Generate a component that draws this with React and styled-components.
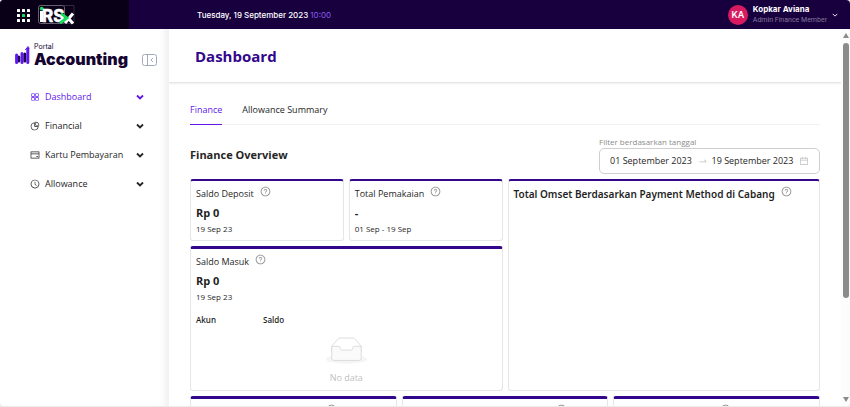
import React from "react";
import styled, { createGlobalStyle } from "styled-components";
import {
  AiOutlineAppstore,
  AiOutlineCalendar,
  AiOutlineClockCircle,
  AiOutlineCreditCard,
  AiOutlinePieChart,
  AiOutlineQuestionCircle,
  AiOutlineSwapRight,
} from "react-icons/ai";

const GlobalStyle = createGlobalStyle`
  * {
    box-sizing: border-box;
  }

  body {
    margin: 0;
    background: #ececec;
    color: #1f1f1f;
    font-family: "Open Sans", "Noto Sans", sans-serif;
    font-size: 9px;
    line-height: 12px;
  }

  h1, h2, h3, p {
    margin: 0;
  }

  button, input {
    padding: 0;
    border: 0;
    background: none;
    color: inherit;
    font: inherit;
  }

  button {
    cursor: pointer;
  }

  svg {
    display: block;
    flex: none;
  }
`;

const Page = styled.div`
  height: 100vh;
  padding-bottom: 1px;
  display: flex;
  flex-direction: column;
`;

const Window = styled.div`
  flex: 1;
  min-height: 0;
  display: flex;
  flex-direction: column;
  overflow: hidden;
  border-radius: 4px;
  background: #fff;
`;

const TopBar = styled.header`
  flex: none;
  height: 29px;
  display: flex;
  align-items: center;
  background: #18003f;
  color: #fff;
  font-family: Inter, sans-serif;
`;

const Brand = styled.div`
  width: 129px;
  height: 100%;
  padding-left: 16px;
  display: flex;
  align-items: center;
  gap: 8px;
  background: #090018;
`;

const Today = styled.p`
  margin-left: 68px;
  flex: 1;
  font-size: 8px;
  font-weight: 500;

  span {
    color: #8a5cf0;
    font-weight: 400;
  }
`;

const Account = styled.button`
  margin-right: 12px;
  display: flex;
  align-items: center;
  gap: 5px;
  text-align: left;
`;

const Avatar = styled.span`
  width: 20px;
  height: 20px;
  border-radius: 50%;
  background: #d81b60;
  font-size: 9px;
  font-weight: 600;
  line-height: 20px;
  text-align: center;
`;

const AccountText = styled.span`
  display: flex;
  flex-direction: column;
  font-size: 8px;
  line-height: 11px;

  small {
    color: #83769b;
    font-family: Roboto, sans-serif;
    font-size: 7px;
  }
`;

const Body = styled.div`
  flex: 1;
  min-height: 0;
  display: flex;
`;

const Sidebar = styled.aside`
  flex: none;
  width: 169px;
  padding: 14px 11px 0 15px;
  border-right: 1px solid #f2f2f2;
  box-shadow: inset -8px 0 8px -6px #ececec;
`;

const PortalHead = styled.div`
  display: flex;
  align-items: flex-end;
  justify-content: space-between;
`;

const PortalLogo = styled.div`
  display: flex;
  align-items: center;
  gap: 4px;
`;

const PortalName = styled.div`
  color: #14042f;
  font-family: Inter, sans-serif;
  font-size: 16px;
  font-weight: 900;
  line-height: 17px;

  small {
    display: block;
    font-size: 7px;
    font-weight: 400;
    line-height: 8px;
  }
`;

const CollapseButton = styled.button`
  padding-bottom: 2px;
`;

const Menu = styled.nav`
  margin: 19px 13px 0 15px;
  display: flex;
  flex-direction: column;
  gap: 9px;
`;

const MenuItem = styled.button`
  height: 20px;
  display: flex;
  align-items: center;
  gap: 5px;
  color: ${({ $active }) => ($active ? "#5f17eb" : "#262626")};

  span {
    flex: 1;
    text-align: left;
  }
`;

const Main = styled.main`
  flex: 1;
  min-width: 0;
  overflow: hidden;
`;

const PageHeader = styled.div`
  height: 54px;
  padding: 0 26px;
  display: flex;
  align-items: center;
  border-bottom: 1px solid #e6e6e6;
  box-shadow: 0 1px 2px #eee;
`;

const PageTitle = styled.h1`
  color: #33078c;
  font-size: 15px;
  font-weight: 700;
  line-height: 20px;
`;

const Content = styled.div`
  padding: 15px 21px 0;
`;

const Tabs = styled.div`
  display: flex;
  gap: 20px;
  border-bottom: 1px solid #f0f0f0;
`;

const Tab = styled.button`
  height: 27px;
  margin-bottom: -1px;
  padding-bottom: 2px;
  border-bottom: 1px solid ${({ $active }) => ($active ? "#5f17eb" : "transparent")};
  color: ${({ $active }) => ($active ? "#5f17eb" : "#262626")};
`;

const Overview = styled.div`
  padding: 11px 0 5px;
  display: flex;
  align-items: flex-end;
  justify-content: space-between;
`;

const SectionTitle = styled.h2`
  padding-bottom: 11px;
  color: #262626;
  font-size: 11px;
  font-weight: 700;
  line-height: 16px;
`;

const Filter = styled.div`
  width: 221px;

  label {
    display: block;
    color: #8c8c8c;
    font-size: 8px;
  }
`;

const DateRange = styled.div`
  height: 26px;
  padding: 0 10px;
  display: flex;
  align-items: center;
  gap: 4px;
  border: 1px solid #cfcfcf;
  border-radius: 5px;
  color: #bfbfbf;

  input {
    flex: 1;
    min-width: 0;
    color: #1f1f1f;
  }
`;

const Cards = styled.div`
  display: grid;
  grid-template-columns: repeat(${({ $columns }) => $columns}, 1fr);
  gap: 5px;
`;

const CardStack = styled.div`
  display: flex;
  flex-direction: column;
  gap: 5px;
`;

const Card = styled.section`
  min-height: 62px;
  padding: 5px;
  grid-column: span ${({ $span }) => $span || 1};
  border: 1px solid #e6e6e6;
  border-top: ${({ $thick }) => ($thick ? "3px" : "2px")} solid #33078c;
  border-radius: 3px;
`;

const CardHead = styled.div`
  padding-left: ${({ $indent }) => $indent || 0}px;
  display: flex;
  gap: 6px;
  color: #8c8c8c;

  h3 {
    padding-top: 2px;
    color: #1f1f1f;
    font-family: ${({ $large }) => ($large ? '"Noto Sans", sans-serif' : "inherit")};
    font-size: ${({ $large }) => ($large ? "10px" : "9px")};
    font-weight: ${({ $large }) => ($large ? 600 : 400)};
  }
`;

const Amount = styled.p`
  margin-top: 5px;
  font-size: 11px;
  font-weight: 700;
  line-height: 16px;
`;

const Period = styled.p`
  margin-top: 2px;
  font-size: 8px;
`;

const AccountTable = styled.table`
  width: 100%;
  margin-top: 11px;
  border-collapse: collapse;
  table-layout: fixed;

  th {
    padding: 0;
    font-size: 8px;
    font-weight: 600;
    text-align: left;
  }

  th:first-child {
    width: 67px;
  }

  td {
    padding: 11px 0 1px;
  }
`;

const Empty = styled.div`
  display: flex;
  flex-direction: column;
  align-items: center;
  gap: 8px;
  color: #bfbfbf;
`;

const Scroller = styled.div`
  flex: none;
  width: 9px;
  padding: 4px 1px 4px 2px;
  display: flex;
  flex-direction: column;
  align-items: center;
  gap: 5px;
  background: #fcfcfc;
`;

const ScrollTrack = styled.div`
  flex: 1;
  width: 6px;
`;

const ScrollThumb = styled.div`
  height: 73%;
  border-radius: 3px;
  background: #8b8b8b;
`;

const AppsIcon = () => (
  <svg width="14" height="14" viewBox="0 0 14 14">
    {[1, 6, 11].map((y) =>
      [1, 6, 11].map((x) => (
        <rect
          key={`${x}-${y}`}
          x={x}
          y={y}
          width="3"
          height="3"
          rx="0.6"
          fill={x === 6 && y === 6 ? "#12e05a" : "#fff"}
        />
      ))
    )}
  </svg>
);

const RsxLogo = () => (
  <svg width="37" height="20" viewBox="0 0 37 20" role="img" aria-label="iRSx">
    <rect x="0.5" y="0.5" width="26" height="18" rx="2" fill="none" stroke="#8f8b99" strokeWidth="0.7" />
    <path d="M26 .5h10v18H24" fill="none" stroke="#4b445c" strokeWidth="0.6" />
    <rect x="2" y="6" width="3" height="11" fill="#fff" />
    <circle cx="3.7" cy="3.6" r="1.9" fill="#12e05a" />
    <text
      x="4"
      y="16.5"
      fill="#fff"
      stroke="#fff"
      strokeWidth="0.6"
      fontFamily="Inter, sans-serif"
      fontSize="17"
      fontWeight="700"
    >
      RS
    </text>
    <path d="M35 8.5l-8 9.5M31 14l4 4.5" stroke="#fff" strokeWidth="3" fill="none" />
    <path d="M23 8.5l6 4.5-7 5" stroke="#12e05a" strokeWidth="2.8" fill="none" />
  </svg>
);

const BarsLogo = () => (
  <svg width="15" height="21" viewBox="0 0 15 21">
    <g strokeWidth="3" strokeLinecap="round">
      <path d="M3.8 12v4M9.8 9v7" stroke="#1d0844" />
      <path d="M1.6 10v7.5M7 8.5v9M12.8 4v13.5" stroke="#6018f0" />
    </g>
    <path d="M10.3 5l2.7-3.5 1.3 2" stroke="#6018f0" fill="none" />
  </svg>
);

const CollapseIcon = () => (
  <svg width="15" height="12" viewBox="0 0 15 12" fill="none" stroke="#a3abba">
    <rect x="0.5" y="0.5" width="14" height="11" rx="2" />
    <path d="M5.5 .5v11M11 4L9 6l2 2" />
  </svg>
);

const Chevron = ({ size = 8, weight = 1.8 }) => (
  <svg width={size} height={size} viewBox="0 0 8 8" fill="none" stroke="currentColor" strokeWidth={weight}>
    <path d="M1 2.5l3 3 3-3" />
  </svg>
);

const EmptyBox = () => (
  <svg width="41" height="27" viewBox="0 0 64 41">
    <g transform="translate(0 1)" fill="none" fillRule="evenodd">
      <ellipse fill="#f5f5f5" cx="32" cy="33" rx="32" ry="7" />
      <g fillRule="nonzero" stroke="#d9d9d9" strokeWidth="1.4">
        <path d="M55 12.76L44.854 1.258C44.367.474 43.656 0 42.907 0H21.093c-.749 0-1.46.474-1.947 1.257L9 12.761V22h46v-9.24z" />
        <path
          d="M41.613 15.931c0-1.605.994-2.93 2.227-2.931H55v18.137C55 33.26 53.68 35 52.05 35h-40.1C10.32 35 9 33.259 9 31.137V13h11.16c1.233 0 2.227 1.323 2.227 2.928v.022c0 1.605 1.005 2.901 2.237 2.901h14.752c1.232 0 2.237-1.308 2.237-2.913v-.007z"
          fill="#fafafa"
        />
      </g>
    </g>
  </svg>
);

const ScrollArrow = ({ down }) => (
  <svg width="6" height="5" viewBox="0 0 6 5" fill="#8b8b8b">
    <path d={down ? "M0 0h6L3 5z" : "M0 5h6L3 0z"} />
  </svg>
);

const menu = [
  { label: "Dashboard", icon: AiOutlineAppstore, active: true },
  { label: "Financial", icon: AiOutlinePieChart },
  { label: "Kartu Pembayaran", icon: AiOutlineCreditCard },
  { label: "Allowance", icon: AiOutlineClockCircle },
];

const StatCard = ({ title, amount, period, span, children }) => (
  <Card $span={span} $thick={Boolean(span)}>
    <CardHead>
      <h3>{title}</h3>
      <AiOutlineQuestionCircle size={11} />
    </CardHead>
    <Amount>{amount}</Amount>
    <Period>{period}</Period>
    {children}
  </Card>
);

const App = () => {
  return (
    <Page>
      <GlobalStyle />
      <Window>
        <TopBar>
          <Brand>
            <AppsIcon />
            <RsxLogo />
          </Brand>
          <Today>
            Tuesday, 19 September 2023 <span>10:00</span>
          </Today>
          <Account>
            <Avatar>KA</Avatar>
            <AccountText>
              <b>Kopkar Aviana</b>
              <small>Admin Finance Member</small>
            </AccountText>
            <Chevron size={6} weight={1.2} />
          </Account>
        </TopBar>

        <Body>
          <Sidebar>
            <PortalHead>
              <PortalLogo>
                <BarsLogo />
                <PortalName>
                  <small>Portal</small>
                  Accounting
                </PortalName>
              </PortalLogo>
              <CollapseButton aria-label="Collapse menu">
                <CollapseIcon />
              </CollapseButton>
            </PortalHead>
            <Menu>
              {menu.map(({ label, icon: Icon, active }) => (
                <MenuItem key={label} $active={active}>
                  <Icon size={10} />
                  <span>{label}</span>
                  <Chevron />
                </MenuItem>
              ))}
            </Menu>
          </Sidebar>

          <Main>
            <PageHeader>
              <PageTitle>Dashboard</PageTitle>
            </PageHeader>
            <Content>
              <Tabs>
                <Tab $active>Finance</Tab>
                <Tab>Allowance Summary</Tab>
              </Tabs>

              <Overview>
                <SectionTitle>Finance Overview</SectionTitle>
                <Filter>
                  <label htmlFor="date-from">Filter berdasarkan tanggal</label>
                  <DateRange>
                    <input id="date-from" defaultValue="01 September 2023" />
                    <AiOutlineSwapRight size={10} />
                    <input aria-label="Sampai tanggal" defaultValue="19 September 2023" />
                    <AiOutlineCalendar size={10} />
                  </DateRange>
                </Filter>
              </Overview>

              <CardStack>
                <Cards $columns={2}>
                  <Cards $columns={2}>
                    <StatCard title="Saldo Deposit" amount="Rp 0" period="19 Sep 23" />
                    <StatCard title="Total Pemakaian" amount="-" period="01 Sep - 19 Sep" />
                    <StatCard title="Saldo Masuk" amount="Rp 0" period="19 Sep 23" span={2}>
                      <AccountTable>
                        <thead>
                          <tr>
                            <th>Akun</th>
                            <th>Saldo</th>
                          </tr>
                        </thead>
                        <tbody>
                          <tr>
                            <td colSpan={2}>
                              <Empty>
                                <EmptyBox />
                                No data
                              </Empty>
                            </td>
                          </tr>
                        </tbody>
                      </AccountTable>
                    </StatCard>
                  </Cards>
                  <Card>
                    <CardHead $large>
                      <h3>Total Omset Berdasarkan Payment Method di Cabang</h3>
                      <AiOutlineQuestionCircle size={11} />
                    </CardHead>
                  </Card>
                </Cards>

                <Cards $columns={3}>
                  {[130, 148, 101].map((indent) => (
                    <Card key={indent} $thick>
                      <CardHead $indent={indent}>
                        <AiOutlineQuestionCircle size={11} />
                      </CardHead>
                    </Card>
                  ))}
                </Cards>
              </CardStack>
            </Content>
          </Main>

          <Scroller>
            <ScrollArrow />
            <ScrollTrack>
              <ScrollThumb />
            </ScrollTrack>
            <ScrollArrow down />
          </Scroller>
        </Body>
      </Window>
    </Page>
  );
};

export default App;
